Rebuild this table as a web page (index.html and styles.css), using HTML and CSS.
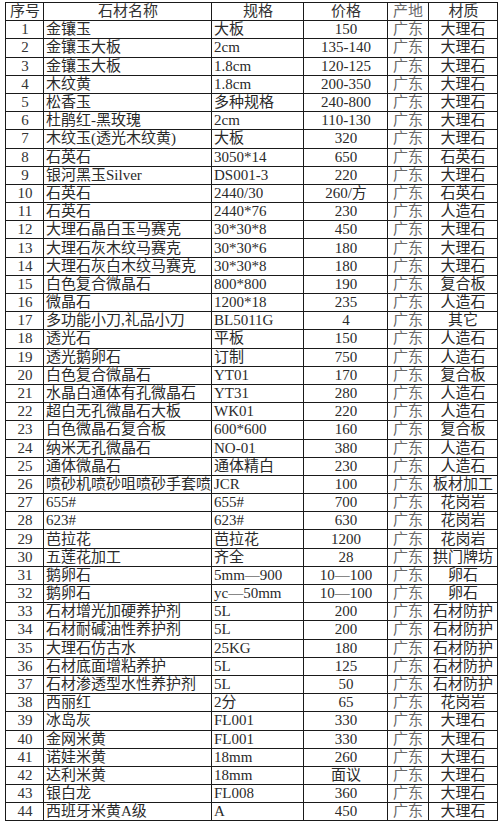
FILE: index.html
```html
<!DOCTYPE html>
<html lang="zh">
<head>
<meta charset="utf-8">
<title>石材价格表</title>
<link rel="stylesheet" href="styles.css">
</head>
<body>
<table class="sheet">
<colgroup>
<col class="c-no"><col class="c-name"><col class="c-spec"><col class="c-price"><col class="c-place"><col class="c-kind">
</colgroup>
<thead>
<tr><th class="no">序号</th><th>石材名称</th><th>规格</th><th>价格</th><th class="place">产地</th><th>材质</th></tr>
</thead>
<tbody>
<tr><td class="no">1</td><td class="name">金镶玉</td><td class="spec">大板</td><td class="price">150</td><td class="place">广东</td><td class="kind">大理石</td></tr>
<tr><td class="no">2</td><td class="name">金镶玉大板</td><td class="spec">2cm</td><td class="price">135-140</td><td class="place">广东</td><td class="kind">大理石</td></tr>
<tr><td class="no">3</td><td class="name">金镶玉大板</td><td class="spec">1.8cm</td><td class="price">120-125</td><td class="place">广东</td><td class="kind">大理石</td></tr>
<tr><td class="no">4</td><td class="name">木纹黄</td><td class="spec">1.8cm</td><td class="price">200-350</td><td class="place">广东</td><td class="kind">大理石</td></tr>
<tr><td class="no">5</td><td class="name">松香玉</td><td class="spec">多种规格</td><td class="price">240-800</td><td class="place">广东</td><td class="kind">大理石</td></tr>
<tr><td class="no">6</td><td class="name">杜鹃红-黑玫瑰</td><td class="spec">2cm</td><td class="price">110-130</td><td class="place">广东</td><td class="kind">大理石</td></tr>
<tr><td class="no">7</td><td class="name">木纹玉(透光木纹黄)</td><td class="spec">大板</td><td class="price">320</td><td class="place">广东</td><td class="kind">大理石</td></tr>
<tr><td class="no">8</td><td class="name">石英石</td><td class="spec">3050*14</td><td class="price">650</td><td class="place">广东</td><td class="kind">石英石</td></tr>
<tr><td class="no">9</td><td class="name">银河黑玉Silver</td><td class="spec">DS001-3</td><td class="price">220</td><td class="place">广东</td><td class="kind">大理石</td></tr>
<tr><td class="no">10</td><td class="name">石英石</td><td class="spec">2440/30</td><td class="price">260/方</td><td class="place">广东</td><td class="kind">石英石</td></tr>
<tr><td class="no">11</td><td class="name">石英石</td><td class="spec">2440*76</td><td class="price">230</td><td class="place">广东</td><td class="kind">人造石</td></tr>
<tr><td class="no">12</td><td class="name">大理石晶白玉马赛克</td><td class="spec">30*30*8</td><td class="price">450</td><td class="place">广东</td><td class="kind">大理石</td></tr>
<tr><td class="no">13</td><td class="name">大理石灰木纹马赛克</td><td class="spec">30*30*6</td><td class="price">180</td><td class="place">广东</td><td class="kind">大理石</td></tr>
<tr><td class="no">14</td><td class="name">大理石灰白木纹马赛克</td><td class="spec">30*30*8</td><td class="price">180</td><td class="place">广东</td><td class="kind">大理石</td></tr>
<tr><td class="no">15</td><td class="name">白色复合微晶石</td><td class="spec">800*800</td><td class="price">190</td><td class="place">广东</td><td class="kind">复合板</td></tr>
<tr><td class="no">16</td><td class="name">微晶石</td><td class="spec">1200*18</td><td class="price">235</td><td class="place">广东</td><td class="kind">人造石</td></tr>
<tr><td class="no">17</td><td class="name">多功能小刀,礼品小刀</td><td class="spec">BL5011G</td><td class="price">4</td><td class="place">广东</td><td class="kind">其它</td></tr>
<tr><td class="no">18</td><td class="name">透光石</td><td class="spec">平板</td><td class="price">150</td><td class="place">广东</td><td class="kind">人造石</td></tr>
<tr><td class="no">19</td><td class="name">透光鹅卵石</td><td class="spec">订制</td><td class="price">750</td><td class="place">广东</td><td class="kind">人造石</td></tr>
<tr><td class="no">20</td><td class="name">白色复合微晶石</td><td class="spec">YT01</td><td class="price">170</td><td class="place">广东</td><td class="kind">复合板</td></tr>
<tr><td class="no">21</td><td class="name">水晶白通体有孔微晶石</td><td class="spec">YT31</td><td class="price">280</td><td class="place">广东</td><td class="kind">人造石</td></tr>
<tr><td class="no">22</td><td class="name">超白无孔微晶石大板</td><td class="spec">WK01</td><td class="price">220</td><td class="place">广东</td><td class="kind">人造石</td></tr>
<tr><td class="no">23</td><td class="name">白色微晶石复合板</td><td class="spec">600*600</td><td class="price">160</td><td class="place">广东</td><td class="kind">复合板</td></tr>
<tr><td class="no">24</td><td class="name">纳米无孔微晶石</td><td class="spec">NO-01</td><td class="price">380</td><td class="place">广东</td><td class="kind">人造石</td></tr>
<tr><td class="no">25</td><td class="name">通体微晶石</td><td class="spec">通体精白</td><td class="price">230</td><td class="place">广东</td><td class="kind">人造石</td></tr>
<tr><td class="no">26</td><td class="name">喷砂机喷砂咀喷砂手套喷</td><td class="spec">JCR</td><td class="price">100</td><td class="place">广东</td><td class="kind">板材加工</td></tr>
<tr><td class="no">27</td><td class="name">655#</td><td class="spec">655#</td><td class="price">700</td><td class="place">广东</td><td class="kind">花岗岩</td></tr>
<tr><td class="no">28</td><td class="name">623#</td><td class="spec">623#</td><td class="price">630</td><td class="place">广东</td><td class="kind">花岗岩</td></tr>
<tr><td class="no">29</td><td class="name">芭拉花</td><td class="spec">芭拉花</td><td class="price">1200</td><td class="place">广东</td><td class="kind">花岗岩</td></tr>
<tr><td class="no">30</td><td class="name">五莲花加工</td><td class="spec">齐全</td><td class="price">28</td><td class="place">广东</td><td class="kind">拱门牌坊</td></tr>
<tr><td class="no">31</td><td class="name">鹅卵石</td><td class="spec">5mm—900</td><td class="price">10—100</td><td class="place">广东</td><td class="kind">卵石</td></tr>
<tr><td class="no">32</td><td class="name">鹅卵石</td><td class="spec">yc—50mm</td><td class="price">10—100</td><td class="place">广东</td><td class="kind">卵石</td></tr>
<tr><td class="no">33</td><td class="name">石材增光加硬养护剂</td><td class="spec">5L</td><td class="price">200</td><td class="place">广东</td><td class="kind">石材防护</td></tr>
<tr><td class="no">34</td><td class="name">石材耐碱油性养护剂</td><td class="spec">5L</td><td class="price">200</td><td class="place">广东</td><td class="kind">石材防护</td></tr>
<tr><td class="no">35</td><td class="name">大理石仿古水</td><td class="spec">25KG</td><td class="price">180</td><td class="place">广东</td><td class="kind">石材防护</td></tr>
<tr><td class="no">36</td><td class="name">石材底面增粘养护</td><td class="spec">5L</td><td class="price">125</td><td class="place">广东</td><td class="kind">石材防护</td></tr>
<tr><td class="no">37</td><td class="name">石材渗透型水性养护剂</td><td class="spec">5L</td><td class="price">50</td><td class="place">广东</td><td class="kind">石材防护</td></tr>
<tr><td class="no">38</td><td class="name">西丽红</td><td class="spec">2分</td><td class="price">65</td><td class="place">广东</td><td class="kind">花岗岩</td></tr>
<tr><td class="no">39</td><td class="name">冰岛灰</td><td class="spec">FL001</td><td class="price">330</td><td class="place">广东</td><td class="kind">大理石</td></tr>
<tr><td class="no">40</td><td class="name">金网米黄</td><td class="spec">FL001</td><td class="price">330</td><td class="place">广东</td><td class="kind">大理石</td></tr>
<tr><td class="no">41</td><td class="name">诺娃米黄</td><td class="spec">18mm</td><td class="price">260</td><td class="place">广东</td><td class="kind">大理石</td></tr>
<tr><td class="no">42</td><td class="name">达利米黄</td><td class="spec">18mm</td><td class="price">面议</td><td class="place">广东</td><td class="kind">大理石</td></tr>
<tr><td class="no">43</td><td class="name">银白龙</td><td class="spec">FL008</td><td class="price">360</td><td class="place">广东</td><td class="kind">大理石</td></tr>
<tr><td class="no">44</td><td class="name">西班牙米黄A级</td><td class="spec">A</td><td class="price">450</td><td class="place">广东</td><td class="kind">大理石</td></tr>
</tbody>
</table>
</body>
</html>
```
FILE: styles.css
```css
html, body {
  margin: 0;
  padding: 0;
  background: #ffffff;
}
body {
  padding: 2px 3px 0 5px;
  font-family: "Liberation Serif", "Noto Sans CJK SC", serif;
  font-size: 15px;
  color: #2a2a2a;
}
.sheet {
  border-collapse: collapse;
  table-layout: fixed;
  width: 492px;
}
.c-no { width: 38px; }
.c-name { width: 168px; }
.c-spec { width: 92px; }
.c-price { width: 84px; }
.c-place { width: 41px; }
.c-kind { width: 69px; }
.sheet tr {
  height: 18.2px;
}
.sheet th,
.sheet td {
  border: 1px solid #1a1a1a;
  padding: 0 1px 0 2px;
  height: 17.2px;
  line-height: 13px;
  white-space: nowrap;
  overflow: hidden;
  font-weight: normal;
  text-align: center;
  vertical-align: middle;
}
.sheet th { color: #333; }
.sheet td.name,
.sheet td.spec {
  text-align: left;
}
.sheet td.no { color: #333; }
.sheet .place {
  color: #6a6a6a;
  padding: 0;
}
.sheet td.kind { padding: 0; }
```
